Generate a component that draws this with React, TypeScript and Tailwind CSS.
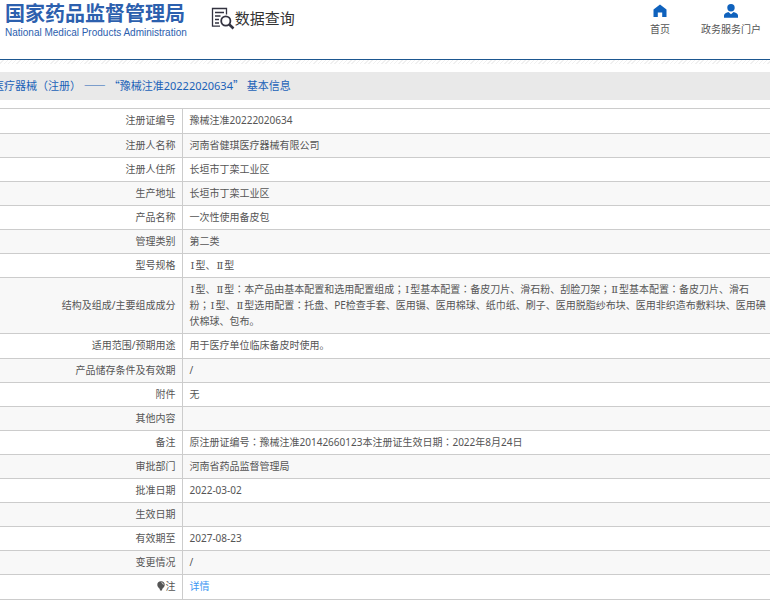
import type { ReactNode } from "react";

type Row = { label: string; value?: string[]; height?: string; note?: boolean };

const rows: Row[] = [
  { label: "注册证编号", value: ["豫械注准20222020634"], height: "h-[25px]" },
  { label: "注册人名称", value: ["河南省健琪医疗器械有限公司"] },
  { label: "注册人住所", value: ["长垣市丁栾工业区"] },
  { label: "生产地址", value: ["长垣市丁栾工业区"] },
  { label: "产品名称", value: ["一次性使用备皮包"] },
  { label: "管理类别", value: ["第二类"] },
  { label: "型号规格", value: ["Ⅰ型、Ⅱ型"] },
  {
    label: "结构及组成/主要组成成分",
    height: "h-14",
    value: [
      "Ⅰ型、Ⅱ型：本产品由基本配置和选用配置组成；Ⅰ型基本配置：备皮刀片、滑石粉、刮脸刀架；Ⅱ型基本配置：备皮刀片、滑石",
      "粉；Ⅰ型、Ⅱ型选用配置：托盘、PE检查手套、医用镊、医用棉球、纸巾纸、刷子、医用脱脂纱布块、医用非织造布敷料块、医用碘",
      "伏棉球、包布。",
    ],
  },
  { label: "适用范围/预期用途", value: ["用于医疗单位临床备皮时使用。"], height: "h-[25px]" },
  { label: "产品储存条件及有效期", value: ["/"] },
  { label: "附件", value: ["无"] },
  { label: "其他内容" },
  { label: "备注", value: ["原注册证编号：豫械注准20142660123本注册证生效日期：2022年8月24日"] },
  { label: "审批部门", value: ["河南省药品监督管理局"] },
  { label: "批准日期", value: ["2022-03-02"] },
  { label: "生效日期" },
  { label: "有效期至", value: ["2027-08-23"] },
  { label: "变更情况", value: ["/"] },
  { label: "注", note: true, height: "h-[25px]" },
];

// Centred colons, full-width quotes and serifed numerals each come from their own family.
function typeset(text: string): ReactNode[] {
  return text.split(/([：；]|[“”—]+|[ⅠⅡ])/).map((part, i) => {
    if (/^[：；]$/.test(part)) {
      return (
        <span key={i} className="font-['Noto_Sans_CJK_JP',sans-serif] leading-none" lang="ja">
          {part}
        </span>
      );
    }
    if (/^[“”—]+$/.test(part)) {
      return (
        <span key={i} className="font-['Noto_Sans_CJK_SC',sans-serif] leading-none" lang="zh-CN">
          {part}
        </span>
      );
    }
    if (/^[ⅠⅡ]$/.test(part)) {
      return (
        <span key={i} className="mx-px font-['DejaVu_Serif',serif] leading-none">
          {part}
        </span>
      );
    }
    return part;
  });
}

function NoteIcon() {
  return (
    <svg viewBox="0 0 8 10" className="mr-px inline-block h-[10px] w-2 align-[-1px]" aria-hidden="true">
      <path d="M4 .2A3.700 3.700 0 0 0 .3 3.900C.3 6 2 6.800 2.700 7.800L3 9.600H5L5.300 7.800C6 6.800 7.700 6 7.700 3.900A3.700 3.700 0 0 0 4 .2Z" fill="#555" />
      <path d="M4.500 1.600a2.200 2.200 0 0 1 1.800 2" stroke="#eee" strokeWidth=".9" fill="none" />
    </svg>
  );
}

function SearchDocIcon() {
  return (
    <svg viewBox="0 0 24 24" className="h-6 w-6" fill="none" stroke="#333340" aria-hidden="true">
      <path d="M9 20.200H1.500V2.500H15.500V8.500" strokeWidth="1.300" />
      <path d="M4 6.500h9M4 10h5.500M4 13.500h4M4 17h4" strokeWidth="1.300" />
      <circle cx="14.800" cy="15" r="4.600" strokeWidth="1.800" />
      <path d="m18.300 18.500 4.200 4" strokeWidth="2.600" />
    </svg>
  );
}

function HomeIcon() {
  return (
    <svg viewBox="0 0 14 14" className="h-[14px] w-[14px]" fill="#0f62bd" aria-hidden="true">
      <path d="M7 .5 13.500 5.500V13H9.200V8.500H4.800V13H.5V5.500Z" />
    </svg>
  );
}

function UserIcon() {
  return (
    <svg viewBox="0 0 14 14" className="h-[14px] w-[14px]" fill="#0f62bd" aria-hidden="true">
      <circle cx="7" cy="3.700" r="3.700" />
      <path d="M0 13.800V11.500Q0 9.400 4.400 8L7 10.200 9.600 8Q14 9.400 14 11.500V13.800Z" />
    </svg>
  );
}

export default function App() {
  return (
    <div className="overflow-x-hidden bg-white font-['Noto_Sans','Noto_Sans_CJK_SC',sans-serif] text-[10px] leading-4 text-[#555]">
      <header className="flex h-[59px] items-start justify-between pr-[9px] pl-[5px]">
        <div className="flex items-start">
          <div className="whitespace-nowrap text-[#2c60ae]">
            <h1 className="font-['Noto_Sans_CJK_SC',sans-serif] text-[20px] leading-[26px] font-bold">
              国家药品监督管理局
            </h1>
            <p className="font-['Liberation_Sans',sans-serif] text-[10px] leading-[14px]">
              National Medical Products Administration
            </p>
          </div>
          <div className="ml-6 flex items-center pt-1.5 text-[#333]">
            <SearchDocIcon />
            <span className="text-[15px] leading-5 whitespace-nowrap">数据查询</span>
          </div>
        </div>
        <nav className="flex gap-[31px] pt-1 whitespace-nowrap">
          <a href="#home" className="flex flex-col items-center gap-[3px]">
            <HomeIcon />
            首页
          </a>
          <a href="#portal" className="flex flex-col items-center gap-[3px]">
            <UserIcon />
            政务服务门户
          </a>
        </nav>
      </header>
      <div className="h-px bg-[#1d5790]" />
      <div className="h-1 bg-[repeating-linear-gradient(135deg,#fff_0_2px,#f0f0f0_2px_3px)]" />
      <main className="pt-2">
        <h2 className="h-7 bg-[#e9e9e9] text-[11px] leading-7 whitespace-nowrap text-[#1b62b8]">
          <span className="-ml-[7px]">
            {typeset("医疗器械（注册） —— “豫械注准20222020634” 基本信息")}
          </span>
        </h2>
        <table className="mt-2 w-full border-collapse border-t border-[#ccc]">
          <tbody>
            {rows.map((row) => (
              <tr key={row.label} className={`border-b border-[#ccc] even:bg-[#f8f8f8] ${row.height ?? "h-6"}`}>
                <th
                  scope="row"
                  className="w-[182px] border-r border-[#ccc] pt-0.5 pr-1.5 pb-1 text-right font-normal whitespace-nowrap"
                >
                  {row.note && <NoteIcon />}
                  {row.label}
                </th>
                <td className="pt-0.5 pb-1 pl-[7px]">
                  {row.note && (
                    <a href="#detail" className="text-[#3c97f2]">
                      详情
                    </a>
                  )}
                  {row.value?.map((line) => (
                    <div key={line}>{typeset(line)}</div>
                  ))}
                </td>
              </tr>
            ))}
          </tbody>
        </table>
      </main>
    </div>
  );
}
